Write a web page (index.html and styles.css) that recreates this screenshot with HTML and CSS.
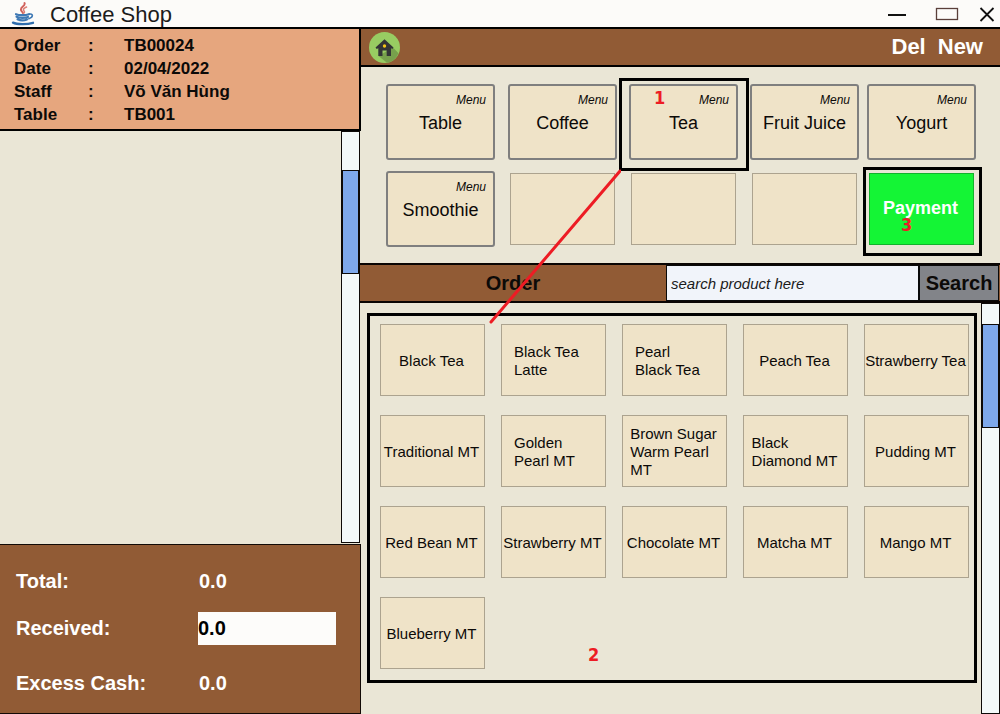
FILE: index.html
```html
<!DOCTYPE html>
<html lang="en">
<head>
<meta charset="utf-8">
<meta name="viewport" content="width=device-width, initial-scale=1">
<title>Coffee Shop</title>
<link rel="stylesheet" href="styles.css">
</head>
<body>
<div class="window">
  <header class="titlebar">
    <svg class="titlebar-logo" viewBox="0 0 24 24" aria-hidden="true">
      <g fill="none" stroke-linecap="round">
        <path d="M13.500 1c1.500 3-4.500 4-3.500 7 .3 1.200 1.500 1.800 1.800 3" stroke="#d0605a" stroke-width="1.900"/>
        <path d="M15.500 5c-2.500 1-4 2.500-2.500 4 .8.900.4 1.600-.4 2.200" stroke="#dc7f76" stroke-width="1.600"/>
        <path d="M5 12.200c3 1.300 9.500 1.200 13 0M5.500 14.800c3 1.400 8.500 1.300 11.500.2M6.500 17.300c2.500 1.200 7 1.200 9.500.2" stroke="#3f79b5" stroke-width="2.200"/>
        <path d="M18 12.200c4-1 5 2.800-.2 4.600" stroke="#3f79b5" stroke-width="1.600"/>
        <path d="M2 20.600c4 1.900 14 2 20 .2" stroke="#2f6dad" stroke-width="2.300"/>
      </g>
    </svg>
    <h1 class="titlebar-name">Coffee Shop</h1>
    <div class="titlebar-actions">
      <button class="window-button" type="button" aria-label="Minimize">
        <svg viewBox="0 0 24 16" aria-hidden="true"><path d="M3 9h18" stroke="#111" stroke-width="2"/></svg>
      </button>
      <button class="window-button" type="button" aria-label="Maximize">
        <svg viewBox="0 0 24 16" aria-hidden="true"><rect x="1.500" y="2.500" width="21" height="11" fill="none" stroke="#5a3f3a" stroke-width="1.300"/></svg>
      </button>
      <button class="window-button window-button--close" type="button" aria-label="Close">
        <svg viewBox="0 0 16 16" aria-hidden="true"><path d="M1.500 2l13 13M14.500 2l-13 13" stroke="#111" stroke-width="1.800"/></svg>
      </button>
    </div>
  </header>

  <div class="workspace">
    <aside class="bill">
      <dl class="info">
        <dt>Order</dt><dd class="colon">:</dd><dd>TB00024</dd>
        <dt>Date</dt><dd class="colon">:</dd><dd>02/04/2022</dd>
        <dt>Staff</dt><dd class="colon">:</dd><dd>Võ Văn Hùng</dd>
        <dt>Table</dt><dd class="colon">:</dd><dd>TB001</dd>
      </dl>
      <div class="bill-list">
        <div class="scroll scroll--bill"><div class="scroll-thumb"></div></div>
      </div>
      <form class="totals">
        <span>Total:</span><output>0.0</output>
        <label for="received">Received:</label><input class="received" id="received" type="text" value="0.0">
        <span>Excess Cash:</span><output>0.0</output>
      </form>
    </aside>

    <main class="sale">
      <nav class="toolbar">
        <button class="home" type="button" aria-label="Home">
          <svg viewBox="0 0 31 31" aria-hidden="true">
            <circle cx="15.500" cy="15.500" r="15.500" fill="#98cc62"/>
            <path d="M24 15.500l5.500 5.700a15.500 15.500 0 0 1-11.500 9.600L9.500 24z" fill="#77a04c"/>
            <path d="M15.500 7.300l9 8.200-1.200 1.500-1.300-.7V24h-4.300v-5.500h-4.200V24H9.300v-7.700L7.700 17l-1.200-1.500z" fill="#333436"/>
            <circle cx="15.500" cy="14" r="1.700" fill="#f5c518"/>
          </svg>
        </button>
        <div class="toolbar-actions">
          <button class="toolbar-button" type="button">Del</button>
          <button class="toolbar-button" type="button">New</button>
        </div>
      </nav>

      <section class="menu" aria-label="Menu">
        <div class="slot"><button class="category" type="button"><em>Menu</em><span>Table</span></button></div>
        <div class="slot"><button class="category" type="button"><em>Menu</em><span>Coffee</span></button></div>
        <div class="slot slot--raised">
          <button class="category" type="button"><em>Menu</em><span>Tea</span></button>
          <div class="callout"><b class="mark mark--one">1</b></div>
          <svg class="connector" viewBox="0 0 132 155" aria-hidden="true"><path d="M131 2L2 153" stroke="#ed1c24" stroke-width="3" stroke-linecap="round"/></svg>
        </div>
        <div class="slot"><button class="category" type="button"><em>Menu</em><span>Fruit Juice</span></button></div>
        <div class="slot"><button class="category" type="button"><em>Menu</em><span>Yogurt</span></button></div>
        <div class="slot"><button class="category" type="button"><em>Menu</em><span>Smoothie</span></button></div>
        <div class="slot"><div class="tile"></div></div>
        <div class="slot"><div class="tile"></div></div>
        <div class="slot"><div class="tile"></div></div>
        <div class="slot">
          <button class="tile tile--pay" type="button">Payment</button>
          <div class="callout callout--pay"><b class="mark mark--three">3</b></div>
        </div>
      </section>

      <form class="orderbar">
        <h2 class="orderbar-title">Order</h2>
        <input class="search" type="text" aria-label="Search product" placeholder="search product here">
        <button class="search-button" type="button">Search</button>
      </form>

      <div class="catalog">
        <section class="products" aria-label="Products">
          <button class="tile" type="button">Black Tea</button>
          <button class="tile tile--start" type="button">Black Tea<br>Latte</button>
          <button class="tile tile--start" type="button">Pearl<br>Black Tea</button>
          <button class="tile" type="button">Peach Tea</button>
          <button class="tile" type="button">Strawberry Tea</button>
          <button class="tile" type="button">Traditional MT</button>
          <button class="tile tile--start" type="button">Golden<br>Pearl MT</button>
          <button class="tile" type="button">Brown Sugar<br>Warm Pearl<br>MT</button>
          <button class="tile" type="button">Black<br>Diamond MT</button>
          <button class="tile" type="button">Pudding MT</button>
          <button class="tile" type="button">Red Bean MT</button>
          <button class="tile" type="button">Strawberry MT</button>
          <button class="tile" type="button">Chocolate MT</button>
          <button class="tile" type="button">Matcha MT</button>
          <button class="tile" type="button">Mango MT</button>
          <button class="tile" type="button">Blueberry MT</button>
          <b class="mark mark--two">2</b>
        </section>
        <div class="scroll scroll--products"><div class="scroll-thumb"></div></div>
      </div>
    </main>
  </div>
</div>
</body>
</html>
```

FILE: styles.css
```css
* { box-sizing: border-box; }

body {
  margin: 0;
  background: #eae6d6;
  color: #0c0a08;
  font-family: "Liberation Sans", Arial, sans-serif;
}

button, input { font: inherit; color: inherit; }
button { padding: 0; border: 0; background: none; }
h1, h2, dl, dd { margin: 0; }
svg { display: block; }

.window { display: flex; flex-direction: column; min-height: 100vh; }

/* Title bar */
.titlebar {
  display: flex;
  align-items: center;
  height: 29px;
  padding: 0 5px 0 11px;
  border-bottom: 2px solid #000;
  background: #fcfbf9;
}
.titlebar-logo { width: 24px; height: 24px; }
.titlebar-name { margin-left: 15px; padding-top: 3px; font-size: 22px; line-height: 24px; font-weight: 400; color: #1c1c1c; }
.titlebar-actions { display: flex; gap: 26px; margin-left: auto; }
.window-button { width: 24px; height: 16px; }
.window-button--close { width: 16px; margin-left: -6px; }

.workspace {
  flex: 1;
  display: grid;
  grid-template-columns: minmax(0, 361fr) minmax(0, 639fr);
}

/* Bill column */
.bill { display: flex; flex-direction: column; }
.info {
  display: grid;
  grid-template-columns: 74px 36px 1fr;
  grid-auto-rows: 23px;
  align-items: center;
  padding: 5px 0 3px 14px;
  border-right: 2px solid #000;
  border-bottom: 2px solid #000;
  background: #e6a67e;
  font-size: 17px;
  font-weight: 700;
}
.bill-list { flex: 1; display: flex; justify-content: flex-end; padding: 0 1px 1px 0; }

.scroll { width: 19px; border: 1px solid #0d0a08; background: #f3f9f9; }
.scroll--bill { padding-top: 38px; }
.scroll--products { padding-top: 20px; }
.scroll-thumb { height: 104px; border: 1px solid #0d0a08; background: #7ea9ec; }

.totals {
  display: grid;
  grid-template-columns: 182px 138px;
  grid-template-rows: 36px 33px 50px;
  row-gap: 13px;
  align-items: center;
  padding: 18px 0 5px 16px;
  border: 1px solid #120a06;
  border-left: 0;
  background: #915b35;
  color: #fff;
  font-size: 20px;
  font-weight: 700;
}
.totals output { padding-left: 1px; }
.received { width: 100%; height: 33px; padding: 0; border: 0; background: #fdfcfa; color: #000; }

/* Sale column */
.sale { display: flex; flex-direction: column; }
.toolbar {
  display: flex;
  align-items: center;
  justify-content: space-between;
  height: 38px;
  padding: 0 17px 0 8px;
  border-bottom: 2px solid #000;
  background: #915b35;
  color: #fff;
}
.home { width: 31px; height: 31px; }
.toolbar-actions { display: flex; gap: 12px; }
.toolbar-button { font-size: 22px; line-height: 26px; font-weight: 700; }

.menu {
  display: grid;
  grid-template-columns: 122fr 121fr 121fr 117fr 109fr;
  row-gap: 11px;
  padding: 17px 24px 16px 25px;
}
.slot { position: relative; width: 109px; height: 76px; display: grid; place-items: center; }
.slot--raised { z-index: 2; }
.category {
  display: flex;
  flex-direction: column;
  gap: 5px;
  width: 100%;
  height: 100%;
  padding: 7px 7px 0;
  border: 2px solid #7f7f7f;
  border-radius: 3px;
  background: #efe3c8;
  font-size: 18px;
  line-height: 22px;
  white-space: nowrap;
}
.category em { align-self: flex-end; font-size: 12px; line-height: 14px; }
.category span { align-self: center; }

.tile {
  display: flex;
  align-items: center;
  justify-content: center;
  width: 105px;
  height: 72px;
  padding: 2px 2px 0 0;
  border: 1px solid #aca38f;
  background: #efe3c8;
  font-size: 15px;
  line-height: 18px;
  text-align: left;
  white-space: nowrap;
}
.tile--start { justify-content: flex-start; padding-left: 12px; }
.tile--pay { padding-bottom: 5px; border-color: #13b22c; background: #14f535; color: #fff; font-size: 18px; font-weight: 700; }

/* Annotations drawn over the menu */
.callout { position: absolute; inset: -6px -11px -11px -10px; border: 3px solid #000; pointer-events: none; }
.callout--pay { inset: -4px -6px -9px -4px; }
.connector { position: absolute; left: -140px; top: 85px; width: 132px; height: 155px; pointer-events: none; }
.mark { position: absolute; color: #ed1c24; font-family: "DejaVu Sans Condensed", "DejaVu Sans", sans-serif; font-size: 18px; line-height: 16px; }
.mark--one { left: 32px; top: 9px; }
.mark--two { left: 218px; bottom: 17px; }
.mark--three { left: 35px; top: 47px; }

.orderbar {
  display: grid;
  grid-template-columns: minmax(0, 306fr) minmax(0, 254fr) minmax(0, 79fr);
  grid-template-rows: 36px;
  height: 40px;
  margin-left: -1px;
  padding-right: 1px;
  border: solid #0a0503;
  border-width: 2px 0;
  background: #915b35;
}
.orderbar-title, .search-button { font-size: 20px; font-weight: 700; }
.orderbar-title { line-height: 36px; text-align: center; }
.search {
  padding: 0 4px;
  border: 1px solid #0a0a0a;
  border-right-width: 2px;
  background: #f1f4fa;
  font-size: 15px;
  font-style: italic;
}
.search::placeholder { color: #1a1a1a; opacity: 1; }
.search-button { border: 1px solid #0a0a0a; border-left: 0; background: #828489; }

.catalog { flex: 1; display: flex; gap: 4px; }
.products {
  position: relative;
  flex: 1;
  display: grid;
  grid-template-columns: repeat(5, 105px);
  justify-content: space-between;
  align-content: start;
  row-gap: 19px;
  margin: 10px 0 31px 6px;
  padding: 8px 5px 8px 10px;
  border: 3px solid #000;
}
```
